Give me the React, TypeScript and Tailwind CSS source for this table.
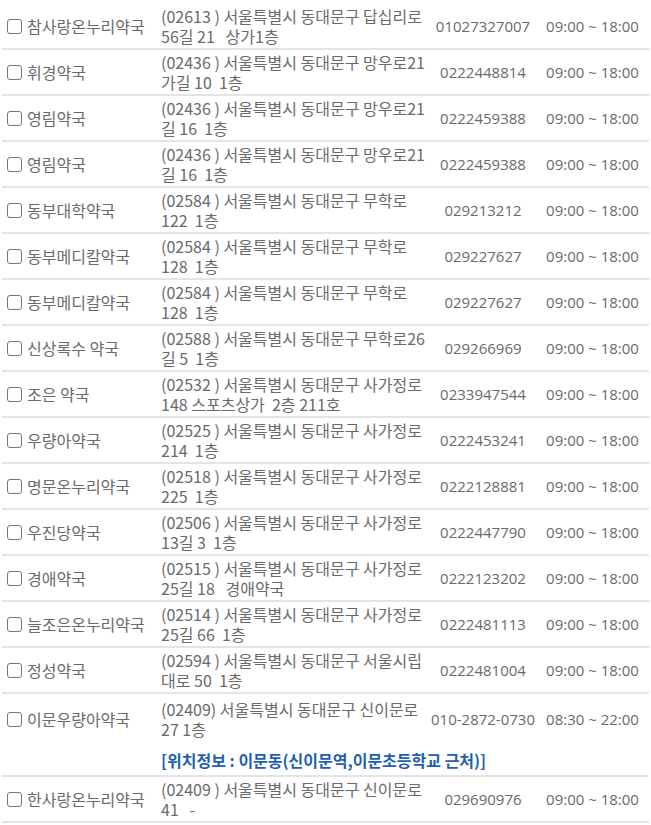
import React from "react";

type Pharmacy = {
  name: string;
  addr1: string;
  addr2: string;
  phone: string;
  hours: string;
  note?: string;
};

const KR = { fontFamily: '"Noto Sans CJK KR", "Open Sans", sans-serif' };
const NUM = { fontFamily: '"Open Sans", "Noto Sans CJK KR", sans-serif' };

const rows: Pharmacy[] = [
  { name: "참사랑온누리약국", addr1: "(02613 ) 서울특별시 동대문구 답십리로", addr2: "56길 21   상가1층", phone: "01027327007", hours: "09:00 ~ 18:00" },
  { name: "휘경약국", addr1: "(02436 ) 서울특별시 동대문구 망우로21", addr2: "가길 10  1층", phone: "0222448814", hours: "09:00 ~ 18:00" },
  { name: "영림약국", addr1: "(02436 ) 서울특별시 동대문구 망우로21", addr2: "길 16  1층", phone: "0222459388", hours: "09:00 ~ 18:00" },
  { name: "영림약국", addr1: "(02436 ) 서울특별시 동대문구 망우로21", addr2: "길 16  1층", phone: "0222459388", hours: "09:00 ~ 18:00" },
  { name: "동부대학약국", addr1: "(02584 ) 서울특별시 동대문구 무학로", addr2: "122  1층", phone: "029213212", hours: "09:00 ~ 18:00" },
  { name: "동부메디칼약국", addr1: "(02584 ) 서울특별시 동대문구 무학로", addr2: "128  1층", phone: "029227627", hours: "09:00 ~ 18:00" },
  { name: "동부메디칼약국", addr1: "(02584 ) 서울특별시 동대문구 무학로", addr2: "128  1층", phone: "029227627", hours: "09:00 ~ 18:00" },
  { name: "신상록수 약국", addr1: "(02588 ) 서울특별시 동대문구 무학로26", addr2: "길 5  1층", phone: "029266969", hours: "09:00 ~ 18:00" },
  { name: "조은 약국", addr1: "(02532 ) 서울특별시 동대문구 사가정로", addr2: "148 스포츠상가  2층 211호", phone: "0233947544", hours: "09:00 ~ 18:00" },
  { name: "우량아약국", addr1: "(02525 ) 서울특별시 동대문구 사가정로", addr2: "214  1층", phone: "0222453241", hours: "09:00 ~ 18:00" },
  { name: "명문온누리약국", addr1: "(02518 ) 서울특별시 동대문구 사가정로", addr2: "225  1층", phone: "0222128881", hours: "09:00 ~ 18:00" },
  { name: "우진당약국", addr1: "(02506 ) 서울특별시 동대문구 사가정로", addr2: "13길 3  1층", phone: "0222447790", hours: "09:00 ~ 18:00" },
  { name: "경애약국", addr1: "(02515 ) 서울특별시 동대문구 사가정로", addr2: "25길 18   경애약국", phone: "0222123202", hours: "09:00 ~ 18:00" },
  { name: "늘조은온누리약국", addr1: "(02514 ) 서울특별시 동대문구 사가정로", addr2: "25길 66  1층", phone: "0222481113", hours: "09:00 ~ 18:00" },
  { name: "정성약국", addr1: "(02594 ) 서울특별시 동대문구 서울시립", addr2: "대로 50  1층", phone: "0222481004", hours: "09:00 ~ 18:00" },
  {
    name: "이문우량아약국",
    addr1: "(02409) 서울특별시 동대문구 신이문로",
    addr2: "27 1층",
    phone: "010-2872-0730",
    hours: "08:30 ~ 22:00",
    note: "[위치정보 : 이문동(신이문역,이문초등학교 근처)]",
  },
  { name: "한사랑온누리약국", addr1: "(02409 ) 서울특별시 동대문구 신이문로", addr2: "41   -", phone: "029690976", hours: "09:00 ~ 18:00" },
];

function Checkbox() {
  return <span className="inline-block w-[15px] h-[15px] shrink-0 rounded-[3px] border border-[#767676] bg-white" />;
}

function Row({ p }: { p: Pharmacy }) {
  const pad = p.note ? "pt-[5px] pb-[5px]" : "py-[2px]";
  const border = p.note ? "" : "border-b-2 border-[#e4e4e4]";
  return (
    <>
      <tr className={border}>
        <td className={`pl-[5px] align-middle ${pad}`}>
          <div className="flex items-center gap-[5px] whitespace-nowrap">
            <Checkbox />
            <span>{p.name}</span>
          </div>
        </td>
        <td className={`pl-[4px] align-middle ${pad}`}>
          <p className="whitespace-pre">{p.addr1 + "\n" + p.addr2}</p>
        </td>
        <td className={`text-center align-middle whitespace-nowrap text-[15px] ${pad}`} style={NUM}>
          {p.phone}
        </td>
        <td className={`text-center align-middle whitespace-nowrap text-[15px] ${pad}`} style={NUM}>
          {p.hours}
        </td>
      </tr>
      {p.note && (
        <tr className="border-b-2 border-[#e4e4e4]">
          <td className="h-[32px]" />
          <td colSpan={3} className="pl-[4px] h-[32px] align-middle font-bold text-[#1f5fb0] whitespace-nowrap">
            {p.note}
          </td>
        </tr>
      )}
    </>
  );
}

export default function App() {
  return (
    <div className="w-[651px] h-[825px] overflow-hidden bg-white px-[2px] pt-[4px]" style={KR}>
      <table className="w-full table-fixed border-collapse text-[16px] leading-[20px] text-[#6a6a6a]">
        <colgroup>
          <col className="w-[155px]" />
          <col className="w-[273px]" />
          <col className="w-[106px]" />
          <col />
        </colgroup>
        <tbody>
          {rows.map((p, i) => (
            <Row key={i} p={p} />
          ))}
        </tbody>
      </table>
    </div>
  );
}
